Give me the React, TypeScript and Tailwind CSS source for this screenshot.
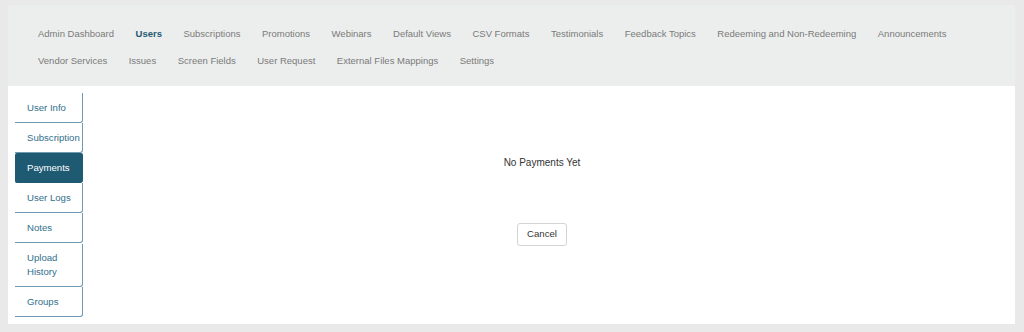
import React from 'react';
import { clsx } from 'clsx';

const navRows = [
  'Admin Dashboard',
  'Users',
  'Subscriptions',
  'Promotions',
  'Webinars',
  'Default Views',
  'CSV Formats',
  'Testimonials',
  'Feedback Topics',
  'Redeeming and Non-Redeeming',
  'Announcements',
  'Vendor Services',
  'Issues',
  'Screen Fields',
  'User Request',
  'External Files Mappings',
  'Settings',
];

const tabs = ['User Info', 'Subscription', 'Payments', 'User Logs', 'Notes', 'Upload History', 'Groups'];

export default function App() {
  const active = 'Payments';

  return (
    <div
      className="min-h-[332px] w-full bg-[#e9e9e9] pt-[5px] pl-[8px] pr-[9px] pb-[8px]"
      style={{ fontFamily: '"Liberation Sans", Arial, sans-serif' }}
    >
      <div className="bg-white">
        {/* top nav */}
        <div className="bg-[#eceeed] pl-[19.25px] pr-[18px] pt-[15px] pb-[12px]">
          <div className="flex flex-wrap">
            {navRows.map(item => (
              <span
                key={item}
                className={clsx(
                  'h-[27px] px-[10.75px] text-[9.5px] leading-[27px] whitespace-nowrap',
                  item === 'Users' ? 'font-bold text-[#1f5a73]' : 'text-[#7a7a7a]'
                )}
              >
                {item}
              </span>
            ))}
          </div>
        </div>

        {/* body */}
        <div className="flex pl-[7px] pt-[7px] pb-[7px] pr-[14px]">
          <div className="flex w-[68px] flex-col">
            {tabs.map(tab => {
              const isActive = tab === active;
              const multi = tab === 'Upload History';
              return (
                <div
                  key={tab}
                  className={clsx(
                    'rounded-br-[3px] pl-[12px] pr-[4px] text-[9.6px]',
                    multi ? 'mt-[1px] pt-[7px] pb-[7px] leading-[14px]' : 'py-[8px] leading-[13px]',
                    isActive
                      ? 'rounded-[2px] border-b border-[#1f5a73] bg-[#1f5a73] text-white'
                      : 'border-r border-b border-[#6f9bb0] text-[#33708c]'
                  )}
                >
                  {multi ? (
                    <>
                      Upload
                      <br />
                      History
                    </>
                  ) : (
                    tab
                  )}
                </div>
              );
            })}
          </div>

          <div className="flex flex-1 flex-col items-center">
            <p className="mt-[63px] text-[10px] leading-[14px] text-[#333]">No Payments Yet</p>
            <button className="mt-[53px] h-[23px] rounded-[3px] border border-[#d4d4d4] bg-white px-[9px] text-[9.6px] text-[#333]">
              Cancel
            </button>
          </div>
        </div>
      </div>
    </div>
  );
}
